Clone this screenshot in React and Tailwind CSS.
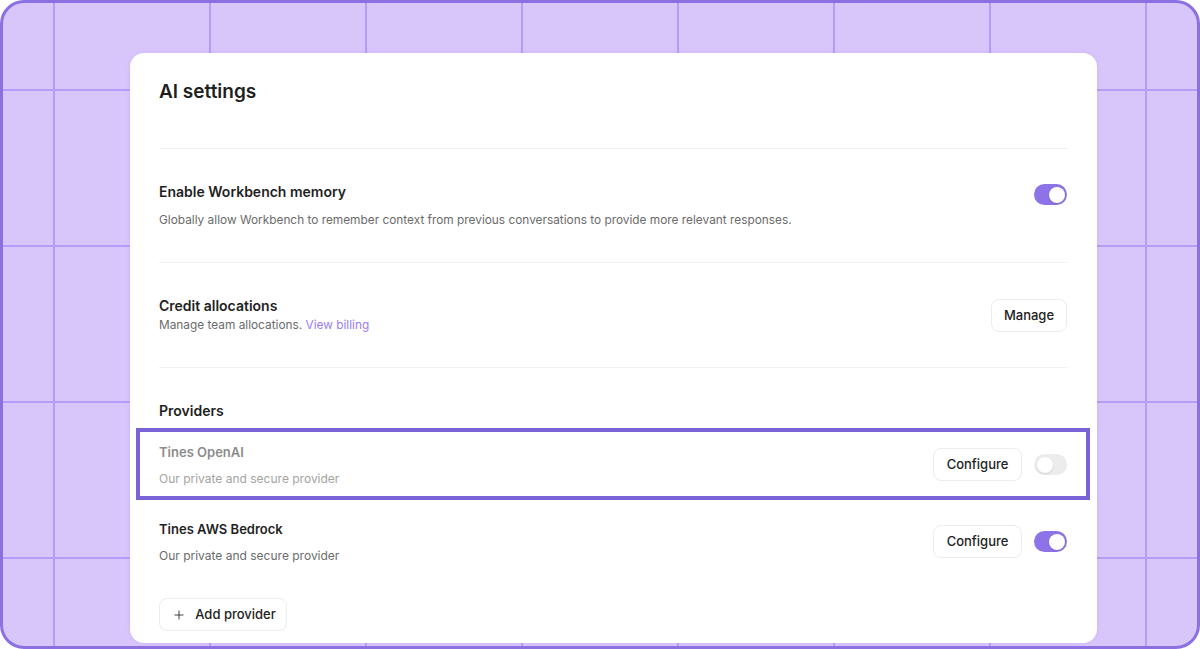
import React from 'react';
import { Plus } from 'lucide-react';

const Toggle = ({ on }) => (
  <div
    className={`w-[33px] h-[21px] rounded-full p-[2.5px] flex ${
      on ? 'bg-[#8e72e7] justify-end' : 'bg-[#ececec] justify-start'
    }`}
  >
    <div className="w-4 h-4 rounded-full bg-white shadow-[0_1px_2px_rgba(0,0,0,0.12)]" />
  </div>
);

const Button = ({ children, className = '' }) => (
  <button
    className={`h-[33px] rounded-lg border border-[#ececec] bg-white text-[13px] font-medium text-[#222] flex items-center justify-center ${className}`}
  >
    {children}
  </button>
);

const Divider = ({ className = '' }) => <div className={`h-px bg-[#f0f0f0] ${className}`} />;

const ProviderRow = ({ name, on, muted }) => (
  <div className="flex items-center justify-between">
    <div className="flex flex-col">
      <div className={`text-[13px] leading-5 font-semibold ${muted ? 'text-[#8c8c8c]' : 'text-[#1f1f1f]'}`}>
        {name}
      </div>
      <div className={`mt-[9px] text-[12px] leading-4 ${muted ? 'text-[#a3a3a3]' : 'text-[#6b6b6b]'}`}>
        Our private and secure provider
      </div>
    </div>
    <div className="flex items-center gap-3">
      <Button className="w-[89px]">Configure</Button>
      <Toggle on={on} />
    </div>
  </div>
);

export default function App() {
  return (
    <div className="w-[1200px] h-[649px] overflow-hidden font-['Inter',sans-serif]">
      <div className="h-full rounded-[24px] border-[3px] border-[#8b70e2] bg-[#d8c6fb] bg-[linear-gradient(to_right,#b49df7_2px,transparent_2px),linear-gradient(to_bottom,#b49df7_2px,transparent_2px)] bg-[size:156px_156px] bg-[position:50px_86px] pt-[50px] pl-[127px] overflow-hidden">
        <div className="w-[967px] h-[590px] rounded-[14px] bg-white shadow-[0_0_4px_rgba(160,130,240,0.25)] pt-[27px] pl-[29px] pr-[30px]">
          <h1 className="text-[19px] leading-6 font-semibold text-[#1f1f1f]">AI settings</h1>
          <Divider className="mt-[44px]" />

          <div className="pt-[33px] flex items-start justify-between">
            <div>
              <div className="text-[14px] leading-5 font-semibold text-[#1f1f1f]">Enable Workbench memory</div>
              <div className="mt-[10px] text-[11.85px] leading-4 text-[#6b6b6b]">
                Globally allow Workbench to remember context from previous conversations to provide more relevant responses.
              </div>
            </div>
            <div className="mt-[2px]">
              <Toggle on />
            </div>
          </div>
          <Divider className="mt-[34px]" />

          <div className="pt-[33px] flex items-start justify-between">
            <div>
              <div className="text-[14px] leading-5 font-semibold text-[#1f1f1f]">Credit allocations</div>
              <div className="mt-px text-[11.85px] leading-4 text-[#6b6b6b]">
                Manage team allocations. <span className="text-[#9b7ef2]">View billing</span>
              </div>
            </div>
            <Button className="mt-[3px] w-[76px]">Manage</Button>
          </div>
          <Divider className="mt-[34px]" />

          <div className="pt-[33px] text-[14px] leading-5 font-semibold text-[#1f1f1f]">Providers</div>

          <div className="mt-[7px] -mx-[23px] border-4 border-[#7c62d8] px-[19px] pt-[10px] pb-[9px]">
            <ProviderRow name="Tines OpenAI" muted />
          </div>

          <div className="mt-[9px] pt-[10px] pb-[9px]">
            <ProviderRow name="Tines AWS Bedrock" on />
          </div>

          <Button className="mt-[25px] w-[128px] gap-[9px] pl-[2px]">
            <Plus size={14} strokeWidth={1.6} className="text-[#333]" />
            Add provider
          </Button>
        </div>
      </div>
    </div>
  );
}
